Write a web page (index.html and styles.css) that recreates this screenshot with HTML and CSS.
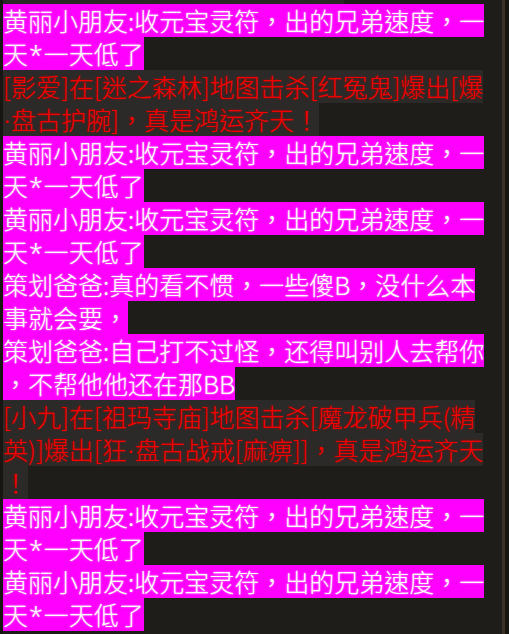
FILE: index.html
```html
<!DOCTYPE html>
<html lang="zh-TW">
<head>
    <meta charset="UTF-8">
    <meta name="viewport" content="width=device-width, initial-scale=1.0">
    <title>聊天</title>
    <link rel="stylesheet" href="styles.css">
</head>
<body>
    <div class="panel">
        <div class="chat">
            <div class="cut"></div>

            <div class="msg shout">
                <span class="ln">黄丽小朋友:收元宝灵符，出的兄弟速度，一</span>
                <span class="ln">天<span class="lat">*</span>一天低了</span>
            </div>
            <div class="msg drop">
                <span class="ln">[影爱]在[迷之森林]地图击杀[红冤鬼]爆出[爆</span>
                <span class="ln"><span class="lat">·</span>盘古护腕]，真是鸿运齐天！</span>
            </div>
            <div class="msg shout">
                <span class="ln">黄丽小朋友:收元宝灵符，出的兄弟速度，一</span>
                <span class="ln">天<span class="lat">*</span>一天低了</span>
            </div>
            <div class="msg shout">
                <span class="ln">黄丽小朋友:收元宝灵符，出的兄弟速度，一</span>
                <span class="ln">天<span class="lat">*</span>一天低了</span>
            </div>
            <div class="msg shout">
                <span class="ln">策划爸爸:真的看不惯，一些傻B，没什么本</span>
                <span class="ln">事就会要，</span>
            </div>
            <div class="msg shout">
                <span class="ln">策划爸爸:自己打不过怪，还得叫别人去帮你</span>
                <span class="ln">，不帮他他还在那BB</span>
            </div>
            <div class="msg drop">
                <span class="ln">[小九]在[祖玛寺庙]地图击杀[魔龙破甲兵(精</span>
                <span class="ln">英)]爆出[狂<span class="lat">·</span>盘古战戒[麻痹]]，真是鸿运齐天</span>
                <span class="ln">！</span>
            </div>
            <div class="msg shout">
                <span class="ln">黄丽小朋友:收元宝灵符，出的兄弟速度，一</span>
                <span class="ln">天<span class="lat">*</span>一天低了</span>
            </div>
            <div class="msg shout">
                <span class="ln">黄丽小朋友:收元宝灵符，出的兄弟速度，一</span>
                <span class="ln">天<span class="lat">*</span>一天低了</span>
            </div>
        </div>
    </div>
</body>
</html>
```

FILE: styles.css
```css
html, body {
    margin: 0;
    padding: 0;
}
body {
    background-color: #171510;
    font-family: "Noto Sans CJK TC", "Noto Sans CJK SC", sans-serif;
    font-weight: 300;
    width: 509px;
    height: 634px;
    overflow: hidden;
}
.panel {
    width: 499px;
    height: 634px;
    background-color: #1f1d19;
    border-left: 3px solid #181612;
    border-right: 3px solid #3a3226;
}
.chat {
    display: flex;
    flex-direction: column;
}
.cut {
    width: 341px;
    height: 4px;
    background: #2a2826;
}
.ln {
    display: block;
    width: fit-content;
    height: 33px;
    line-height: 33px;
    font-size: 25px;
    white-space: nowrap;
}
/* punto y asterisco con ancho latino, no de ancho completo */
.lat {
    font-family: "Noto Sans", sans-serif;
    padding: 0 1px;
}
.shout .ln {
    background: #ff00ff;
    color: #ffffff;
    text-shadow: 0 0 2px rgba(255, 255, 255, 0.8);
}
.drop .ln {
    background: #2c2a28;
    color: #f20000;
    text-shadow: 0 0 2px rgba(190, 0, 0, 0.9);
}
```
